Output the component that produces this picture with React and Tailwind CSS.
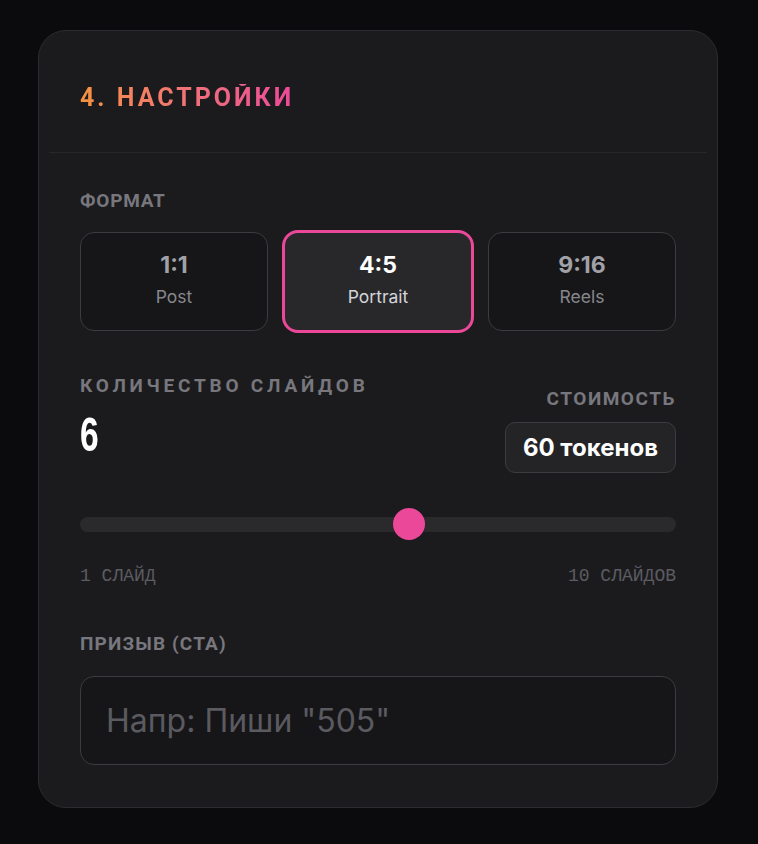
import React from "react";

const formats = [
  { ratio: "1:1", name: "Post" },
  { ratio: "4:5", name: "Portrait", active: true },
  { ratio: "9:16", name: "Reels" },
];

export default function App() {
  const value = 6;
  const pct = (value - 1) / 9;
  return (
    <div className="min-h-[844px] w-full bg-[#0b0b0d] pt-[30px] pr-[40px] pl-[38px] font-['Inter',sans-serif]">
      <div className="rounded-[28px] border border-[#2c2c30] bg-[#1b1b1d] p-[10px]">
        <div className="border-b border-[#27272a] px-[31px] pt-[43px] pb-[40px]">
          <h2 className="inline-block bg-gradient-to-r from-[#f5923e] to-[#ec4899] bg-clip-text font-['Roboto',sans-serif] text-[25px] leading-[28px] font-bold tracking-[0.12em] text-transparent">
            4. НАСТРОЙКИ
          </h2>
        </div>
        <div className="px-[31px] pt-[38px] pb-[32px]">
          <div className="font-['Roboto',sans-serif] text-[19px] leading-[20px] font-bold tracking-[0.04em] text-[#77777d]">
            ФОРМАТ
          </div>
          <div className="mt-[21px] grid grid-cols-3 gap-[16px]">
            {formats.map((f) =>
              f.active ? (
                <div
                  key={f.ratio}
                  className="-mx-[2px] -my-[2px] flex h-[103px] flex-col items-center justify-center rounded-[16px] border-[3px] border-[#ec4899] bg-[#28282b] pb-[4px]"
                >
                  <div className="text-[23px] leading-[28px] font-bold text-white">{f.ratio}</div>
                  <div className="mt-[7px] text-[17.5px] leading-[22px] text-[#d4d4d8]">{f.name}</div>
                </div>
              ) : (
                <div
                  key={f.ratio}
                  className="flex h-[99px] flex-col items-center justify-center rounded-[14px] border-[1.5px] border-[#3b3b40] bg-[#161618] pb-[4px]"
                >
                  <div className="text-[23px] leading-[28px] font-bold text-[#a1a1a7]">{f.ratio}</div>
                  <div className="mt-[7px] text-[17.5px] leading-[22px] text-[#86868c]">{f.name}</div>
                </div>
              )
            )}
          </div>

          <div className="mt-[45px] flex items-start justify-between">
            <div>
              <div className="font-['Roboto',sans-serif] text-[19px] leading-[20px] font-bold tracking-[0.2em] text-[#77777d]">
                КОЛИЧЕСТВО СЛАЙДОВ
              </div>
              <div className="mt-[15px] origin-left scale-x-[0.7] font-['Liberation_Sans_Narrow','Liberation_Sans',sans-serif] text-[48px] leading-[48px] font-bold text-white">
                {value}
              </div>
            </div>
            <div className="flex flex-col items-end pt-[13px]">
              <div className="font-['Roboto',sans-serif] text-[19px] leading-[20px] font-bold tracking-[0.08em] text-[#77777d]">
                СТОИМОСТЬ
              </div>
              <div className="mt-[13px] flex h-[51px] items-center rounded-[10px] border-[1.5px] border-[#3b3b40] bg-[#242427] px-[17px] text-[24px] font-bold text-white">
                60 токенов
              </div>
            </div>
          </div>

          <div className="relative mt-[35px] h-[32px]">
            <div className="absolute top-[9px] right-0 left-0 h-[15px] rounded-full bg-[#2a2a2d]" />
            <div
              className="absolute top-0 h-[32px] w-[32px] rounded-full bg-[#ec4899]"
              style={{ left: `calc(${pct} * (100% - 32px))` }}
            />
          </div>

          <div className="mt-[26px] flex justify-between font-['Liberation_Mono',monospace] text-[18px] leading-[20px] text-[#5c5c62]">
            <span>1 СЛАЙД</span>
            <span>10 СЛАЙДОВ</span>
          </div>

          <div className="mt-[48px] font-['Roboto',sans-serif] text-[19px] leading-[20px] font-bold tracking-[0.06em] text-[#77777d]">
            ПРИЗЫВ (CTA)
          </div>
          <input
            className="mt-[22px] block h-[89px] w-full rounded-[14px] border-[1.5px] border-[#3b3b40] bg-[#161618] px-[25px] font-['Inter',sans-serif] text-[32px] text-white outline-none placeholder:text-[#5a5a60]"
            placeholder='Напр: Пиши "505"'
          />
        </div>
      </div>
    </div>
  );
}
